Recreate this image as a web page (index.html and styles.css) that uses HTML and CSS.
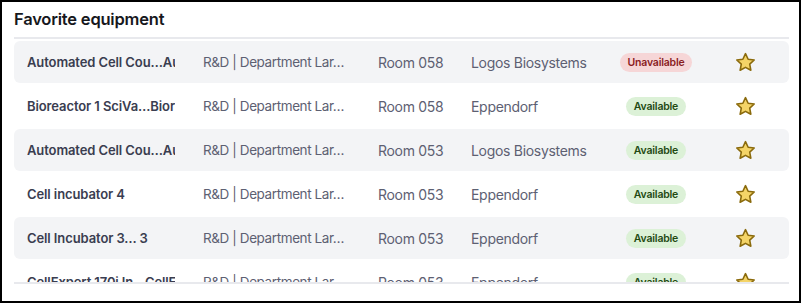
FILE: index.html
```html
<!DOCTYPE html>
<html lang="en">
<head>
<meta charset="utf-8">
<title>Favorite equipment</title>
<link rel="stylesheet" href="styles.css">
</head>
<body>
<div class="frame">
  <h2 class="title">Favorite equipment</h2>
  <div class="list">
    <div class="row">
      <div class="cell name">Automated Cell Cou…Au</div>
      <div class="cell dept">R&amp;D | Department Lar…</div>
      <div class="cell">Room 058</div>
      <div class="cell">Logos Biosystems</div>
      <div class="cell badge-cell"><span class="badge bad">Unavailable</span></div>
      <div class="cell star-cell"><svg class="star" viewBox="0 0 20 20"><path d="M10 1.6l2.5 5.3 5.8.7-4.3 4 1.1 5.8L10 14.6l-5.1 2.8 1.1-5.8-4.3-4 5.8-.7z"/></svg></div>
    </div>
    <div class="row">
      <div class="cell name">Bioreactor 1 SciVa…Bior</div>
      <div class="cell dept">R&amp;D | Department Lar…</div>
      <div class="cell">Room 058</div>
      <div class="cell">Eppendorf</div>
      <div class="cell badge-cell"><span class="badge ok">Available</span></div>
      <div class="cell star-cell"><svg class="star" viewBox="0 0 20 20"><path d="M10 1.6l2.5 5.3 5.8.7-4.3 4 1.1 5.8L10 14.6l-5.1 2.8 1.1-5.8-4.3-4 5.8-.7z"/></svg></div>
    </div>
    <div class="row">
      <div class="cell name">Automated Cell Cou…Au</div>
      <div class="cell dept">R&amp;D | Department Lar…</div>
      <div class="cell">Room 053</div>
      <div class="cell">Logos Biosystems</div>
      <div class="cell badge-cell"><span class="badge ok">Available</span></div>
      <div class="cell star-cell"><svg class="star" viewBox="0 0 20 20"><path d="M10 1.6l2.5 5.3 5.8.7-4.3 4 1.1 5.8L10 14.6l-5.1 2.8 1.1-5.8-4.3-4 5.8-.7z"/></svg></div>
    </div>
    <div class="row">
      <div class="cell name">Cell incubator 4</div>
      <div class="cell dept">R&amp;D | Department Lar…</div>
      <div class="cell">Room 053</div>
      <div class="cell">Eppendorf</div>
      <div class="cell badge-cell"><span class="badge ok">Available</span></div>
      <div class="cell star-cell"><svg class="star" viewBox="0 0 20 20"><path d="M10 1.6l2.5 5.3 5.8.7-4.3 4 1.1 5.8L10 14.6l-5.1 2.8 1.1-5.8-4.3-4 5.8-.7z"/></svg></div>
    </div>
    <div class="row">
      <div class="cell name">Cell Incubator 3… 3</div>
      <div class="cell dept">R&amp;D | Department Lar…</div>
      <div class="cell">Room 053</div>
      <div class="cell">Eppendorf</div>
      <div class="cell badge-cell"><span class="badge ok">Available</span></div>
      <div class="cell star-cell"><svg class="star" viewBox="0 0 20 20"><path d="M10 1.6l2.5 5.3 5.8.7-4.3 4 1.1 5.8L10 14.6l-5.1 2.8 1.1-5.8-4.3-4 5.8-.7z"/></svg></div>
    </div>
    <div class="row">
      <div class="cell name">CellExpert 170i In…CellE</div>
      <div class="cell dept">R&amp;D | Department Lar…</div>
      <div class="cell">Room 053</div>
      <div class="cell">Eppendorf</div>
      <div class="cell badge-cell"><span class="badge ok">Available</span></div>
      <div class="cell star-cell"><svg class="star" viewBox="0 0 20 20"><path d="M10 1.6l2.5 5.3 5.8.7-4.3 4 1.1 5.8L10 14.6l-5.1 2.8 1.1-5.8-4.3-4 5.8-.7z"/></svg></div>
    </div>
    <div class="row">
      <div class="cell name">Centrifuge 5910 Ri</div>
      <div class="cell dept">R&amp;D | Department Lar…</div>
      <div class="cell">Room 053</div>
      <div class="cell">Eppendorf</div>
      <div class="cell badge-cell"><span class="badge ok">Available</span></div>
      <div class="cell star-cell"><svg class="star" viewBox="0 0 20 20"><path d="M10 1.6l2.5 5.3 5.8.7-4.3 4 1.1 5.8L10 14.6l-5.1 2.8 1.1-5.8-4.3-4 5.8-.7z"/></svg></div>
    </div>
    <div class="row">
      <div class="cell name">Flow Cytometer 2</div>
      <div class="cell dept">R&amp;D | Department Lar…</div>
      <div class="cell">Room 061</div>
      <div class="cell">Beckman Coulter</div>
      <div class="cell badge-cell"><span class="badge ok">Available</span></div>
      <div class="cell star-cell"><svg class="star" viewBox="0 0 20 20"><path d="M10 1.6l2.5 5.3 5.8.7-4.3 4 1.1 5.8L10 14.6l-5.1 2.8 1.1-5.8-4.3-4 5.8-.7z"/></svg></div>
    </div>
    <div class="row">
      <div class="cell name">Microscope 3</div>
      <div class="cell dept">R&amp;D | Department Lar…</div>
      <div class="cell">Room 061</div>
      <div class="cell">Zeiss</div>
      <div class="cell badge-cell"><span class="badge ok">Available</span></div>
      <div class="cell star-cell"><svg class="star" viewBox="0 0 20 20"><path d="M10 1.6l2.5 5.3 5.8.7-4.3 4 1.1 5.8L10 14.6l-5.1 2.8 1.1-5.8-4.3-4 5.8-.7z"/></svg></div>
    </div>
    <div class="row">
      <div class="cell name">Plate Reader 1</div>
      <div class="cell dept">R&amp;D | Department Lar…</div>
      <div class="cell">Room 062</div>
      <div class="cell">Tecan</div>
      <div class="cell badge-cell"><span class="badge ok">Available</span></div>
      <div class="cell star-cell"><svg class="star" viewBox="0 0 20 20"><path d="M10 1.6l2.5 5.3 5.8.7-4.3 4 1.1 5.8L10 14.6l-5.1 2.8 1.1-5.8-4.3-4 5.8-.7z"/></svg></div>
    </div>
  </div>
</div>
</body>
</html>
```
FILE: styles.css
```css
* { box-sizing: border-box; }
html, body { margin: 0; padding: 0; background: #fff; }
body { font-family: Inter, "Noto Sans", sans-serif; }

.frame {
  width: 801px;
  height: 303px;
  border: 2px solid #000;
  padding: 0 10px 0 12px;
  display: flex;
  flex-direction: column;
}

.title {
  margin: 0;
  padding-top: 7px;
  height: 35px;
  font-size: 16.5px;
  font-weight: 600;
  color: #16171c;
  letter-spacing: -0.2px;
}

.list {
  height: 247px;
  border-top: 2px solid #e8e9ed;
  border-bottom: 2px solid #e8e9ed;
  padding-top: 2px;
  overflow-y: scroll;
  display: flex;
  flex-direction: column;
  gap: 2px;
}
.list::-webkit-scrollbar { width: 11px; }
.list::-webkit-scrollbar-track { background: #fff; border-left: 1px solid #ececef; }
.list::-webkit-scrollbar-thumb {
  background: #c1c1c1;
  border-radius: 4px;
  border: 2px solid transparent;
  border-left-width: 3px;
  background-clip: padding-box;
}

.row {
  flex: 0 0 42px;
  display: grid;
  grid-template-columns: 176px 175px 93px 130px 110px 1fr;
  align-items: center;
  padding-left: 13px;
  border-radius: 6px;
  font-size: 14px;
  letter-spacing: -0.3px;
  color: #5d6072;
}
.row:nth-child(odd) { background: #f3f4f6; }

.cell { white-space: nowrap; }
.name { overflow: hidden; width: 148px; font-size: 13px; font-weight: 600; color: #3a3d50; letter-spacing: -0.1px; }
.dept { font-size: 13.5px; letter-spacing: -0.4px; }

.badge-cell { display: flex; justify-content: center; }
.badge {
  display: inline-block;
  height: 19px;
  line-height: 19px;
  padding: 0 8px;
  border-radius: 10px;
  font-size: 10.5px;
  font-weight: 600;
  letter-spacing: -0.2px;
}
.badge.bad { background: #f6d6d7; color: #8a1c1f; }
.badge.ok { background: #dcf1d7; color: #1f4a12; }

.star-cell { padding-left: 24px; display: flex; }
.star { width: 21px; height: 21px; fill: #f4d467; stroke: #8a6a0c; stroke-width: 1.5; stroke-linejoin: round; }
```
